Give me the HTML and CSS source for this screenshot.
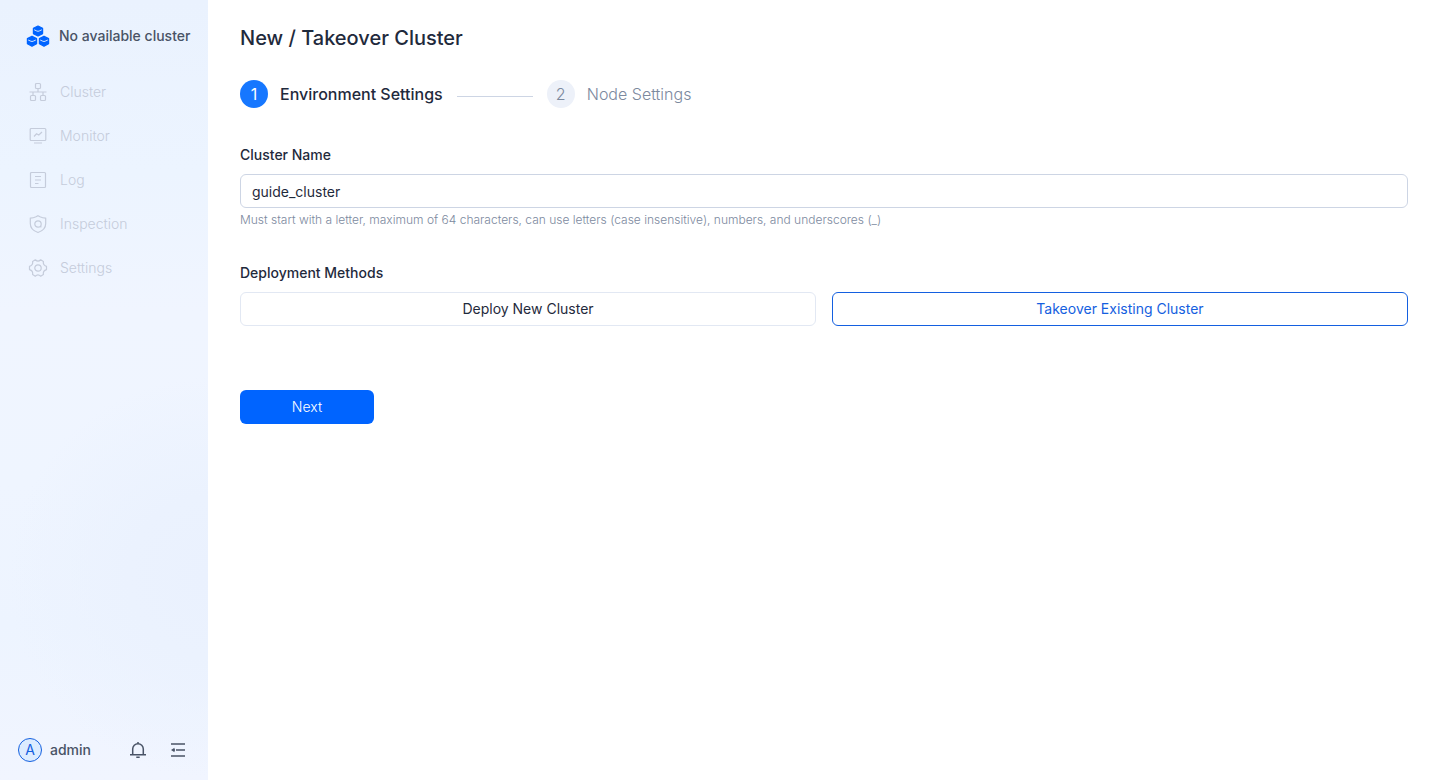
FILE: index.html
```html
<!DOCTYPE html>
<html lang="en">
<head>
    <meta charset="UTF-8">
    <meta name="viewport" content="width=device-width, initial-scale=1.0">
    <title>New / Takeover Cluster</title>
    <link rel="stylesheet" href="styles.css">
</head>
<body>
    <aside class="sidebar">
        <div class="brand">
            <svg class="brand-logo" width="24" height="24" viewBox="0 0 24 24">
                <defs>
                    <g id="cube">
                        <path d="M0-5 4.6-2.6V2.6L0 5-4.6 2.6V-2.6Z" fill="#0064ff" stroke="#0064ff" stroke-width="1.2" stroke-linejoin="round"/>
                        <path d="M-3.8-1.2-1.2 0Q0 .6 1.2 0L3.8-1.2" fill="none" stroke="#eaf2ff" stroke-width=".9"/>
                    </g>
                </defs>
                <use href="#cube" x="12" y="7"/>
                <use href="#cube" x="6" y="17.2"/>
                <use href="#cube" x="18" y="17.2"/>
            </svg>
            <span>No available cluster</span>
        </div>
        <nav class="menu">
            <a href="#cluster">
                <svg class="icon" viewBox="0 0 20 20">
                    <rect x="7.5" y="1.5" width="5" height="5" rx="1"/>
                    <rect x="2.5" y="13.5" width="5" height="5" rx="1"/>
                    <rect x="12.5" y="13.5" width="5" height="5" rx="1"/>
                    <path d="M10 6.5V10M1.5 10H18.5M5 10V13.5M15 10V13.5"/>
                </svg>
                Cluster
            </a>
            <a href="#monitor">
                <svg class="icon" viewBox="0 0 20 20">
                    <rect x="2.2" y="2.5" width="15.6" height="12" rx="1"/>
                    <path d="M6 17H14M6 10.5 8.5 7.8 10.8 9 14 6"/>
                </svg>
                Monitor
            </a>
            <a href="#log">
                <svg class="icon" viewBox="0 0 20 20">
                    <rect x="2.5" y="2.5" width="15" height="15" rx="1"/>
                    <path d="M7 6.5H13M7 10H13M7 13.5H10.5"/>
                </svg>
                Log
            </a>
            <a href="#inspection">
                <svg class="icon" viewBox="0 0 20 20">
                    <path d="M10 1.7 12 2.8Q14.5 4 17.7 4.2V9.5C17.7 14 14.5 17 10 18.5 5.5 17 2.3 14 2.3 9.5V4.2Q5.5 4 8 2.8Z"/>
                    <circle cx="10" cy="10" r="3.2"/>
                    <path d="M12.2 12.2 13.4 13.2"/>
                </svg>
                Inspection
            </a>
            <a href="#settings">
                <svg class="icon" viewBox="0 0 20 20">
                    <path d="M7.3 1.8Q10 4.4 12.7 1.8L15.4 3.4Q14.7 7.2 18.5 8.4V11.6Q14.7 12.8 15.4 16.6L12.7 18.2Q10 15.6 7.3 18.2L4.6 16.6Q5.3 12.8 1.5 11.6V8.4Q5.3 7.2 4.6 3.4Z" stroke-linejoin="round"/>
                    <circle cx="10" cy="10" r="3.2"/>
                </svg>
                Settings
            </a>
        </nav>
        <div class="user-bar">
            <span class="avatar">A</span>
            <span class="user-name">admin</span>
            <button class="icon-btn" type="button" aria-label="Notifications">
                <svg class="icon" viewBox="0 0 20 20">
                    <path d="M4.7 14.5V9A5.3 5.3 0 0 1 15.3 9V14.5M2 14.7H18M10 2V3.7M8.3 17.3H11.7"/>
                </svg>
            </button>
            <button class="icon-btn" type="button" aria-label="Collapse menu">
                <svg class="icon" viewBox="0 0 20 20">
                    <path d="M3 4H17M8 10H17M3 16H17M5 10H7"/>
                    <path d="M3 10 6.5 7.8V12.2Z" fill="currentColor" stroke="none"/>
                </svg>
            </button>
        </div>
    </aside>

    <main>
        <h1>New / Takeover Cluster</h1>

        <ol class="steps">
            <li class="step active"><span class="step-number">1</span>Environment Settings</li>
            <li class="step-line" role="presentation"></li>
            <li class="step"><span class="step-number">2</span>Node Settings</li>
        </ol>

        <form>
            <div class="field">
                <label for="clusterName">Cluster Name</label>
                <input type="text" id="clusterName" value="guide_cluster" aria-describedby="clusterHint">
                <p class="hint" id="clusterHint">Must start with a letter, maximum of 64 characters, can use letters (case insensitive), numbers, and underscores (_)</p>
            </div>

            <div class="field">
                <h2 id="methodsTitle">Deployment Methods</h2>
                <div class="methods" role="group" aria-labelledby="methodsTitle">
                    <button class="method" type="button">Deploy New Cluster</button>
                    <button class="method selected" type="button">Takeover Existing Cluster</button>
                </div>
            </div>

            <button class="next-btn" type="submit">Next</button>
        </form>
    </main>
</body>
</html>
```
FILE: styles.css
```css
* {
    box-sizing: border-box;
    margin: 0;
    padding: 0;
}
body {
    display: flex;
    min-height: 100vh;
    font-family: Inter, "Liberation Sans", sans-serif;
    font-size: 14px;
    line-height: 22px;
    color: #1f2a3c;
    background-color: #fff;
}
button, input {
    font: inherit;
    color: inherit;
}
button {
    cursor: pointer;
}

/* Sidebar */
.sidebar {
    display: flex;
    flex-direction: column;
    flex-shrink: 0;
    width: 208px;
    background:
        radial-gradient(circle at 100% 74%, #eaf1fe 0, #ebf2fe 80px, rgba(236, 244, 255, 0) 200px),
        linear-gradient(#eaf2fe 0, #ecf4ff 22%, #f0f5ff 40%, #eff5ff 62%, #edf4ff 80%, #f1f5ff 100%);
}
.brand {
    display: flex;
    align-items: center;
    gap: 9px;
    padding: 24px 16px 20px 26px;
    font-weight: 500;
    color: #495366;
    white-space: nowrap;
}
.brand-logo {
    flex-shrink: 0;
}
.menu {
    display: flex;
    flex-direction: column;
    gap: 4px;
    padding: 4px 28px;
}
.menu a {
    display: flex;
    align-items: center;
    gap: 12px;
    height: 40px;
    font-weight: 300;
    color: #c5ccdb;
    text-decoration: none;
}
.icon {
    display: block;
    width: 20px;
    height: 20px;
    fill: none;
    stroke: currentColor;
    stroke-width: 1.2;
}
.user-bar {
    display: flex;
    align-items: center;
    margin-top: auto;
    padding: 18px 20px 18px 18px;
    color: #495366;
}
.avatar {
    display: flex;
    align-items: center;
    justify-content: center;
    width: 24px;
    height: 24px;
    border: 1px solid #1460e0;
    border-radius: 50%;
    background-color: #dcecff;
    color: #1460e0;
}
.user-name {
    margin: 0 auto 0 8px;
    font-weight: 500;
}
.icon-btn {
    border: none;
    background: none;
}
.icon-btn + .icon-btn {
    margin-left: 20px;
}
.icon-btn .icon {
    stroke-width: 1.5;
}

/* Content */
main {
    flex: 1;
    padding: 24px 32px;
}
h1 {
    font-size: 20px;
    font-weight: 500;
    line-height: 28px;
}
.steps {
    display: flex;
    align-items: center;
    gap: 14px;
    margin: 28px 0 36px;
    list-style: none;
}
.step {
    display: flex;
    align-items: center;
    gap: 12px;
    font-size: 16px;
    font-weight: 300;
    line-height: 28px;
    color: #7c899e;
}
.step-number {
    width: 28px;
    height: 28px;
    border-radius: 50%;
    background-color: #edf1f9;
    text-align: center;
}
.step-line {
    width: 76px;
    height: 1px;
    margin-top: 4px;
    background-color: #cdd5e4;
}
.step.active {
    font-weight: 500;
    color: #1f2a3c;
}
.active .step-number {
    background-color: #1677ff;
    color: #fff;
    font-weight: 400;
}
.field {
    margin-bottom: 32px;
}
.field label,
.field h2 {
    display: block;
    margin-bottom: 8px;
    font-size: 14px;
    font-weight: 500;
}
.field input {
    display: block;
    width: 100%;
    height: 34px;
    padding: 0 11px;
    border: 1px solid #cdd5e4;
    border-radius: 6px;
}
.hint {
    margin-top: 2px;
    font-size: 12px;
    font-weight: 300;
    line-height: 20px;
    color: #7c899e;
}
.methods {
    display: grid;
    grid-template-columns: 1fr 1fr;
    gap: 16px;
}
.method {
    height: 34px;
    border: 1px solid #e2e8f3;
    border-radius: 6px;
    background-color: #fff;
}
.method.selected {
    border-color: #1460e0;
    color: #1460e0;
}
.next-btn {
    width: 134px;
    height: 34px;
    margin-top: 32px;
    border: none;
    border-radius: 6px;
    background-color: #0064ff;
    color: #fff;
    font-weight: 300;
}
```
